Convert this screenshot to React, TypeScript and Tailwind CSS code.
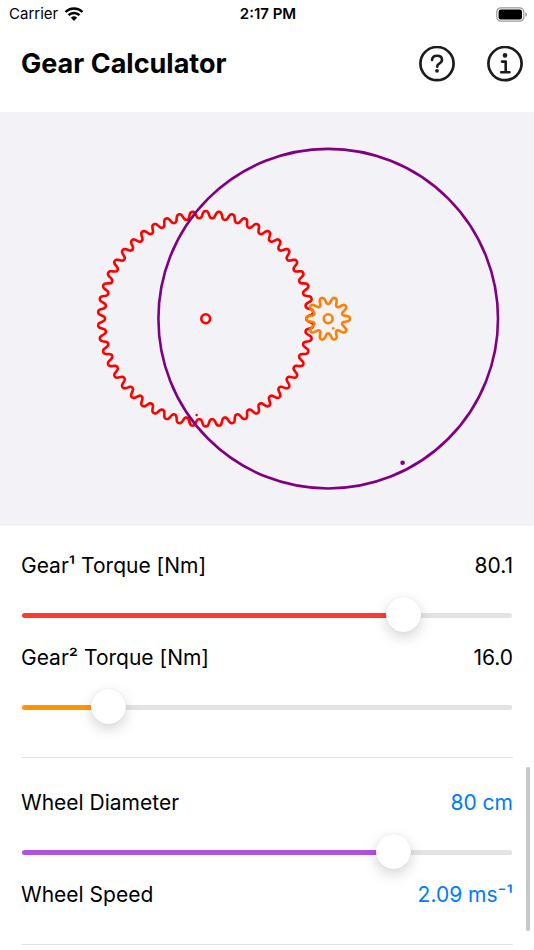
import { useState, type CSSProperties } from "react";

const TAU = Math.PI * 2;

/** Closed outline of a gear with rounded, tapering teeth. `phase` is the angle of the first tooth. */
function gearPath(cx: number, cy: number, radius: number, teeth: number, phase: number) {
  const steps = teeth * 24;
  const points: string[] = [];
  for (let i = 0; i < steps; i++) {
    const angle = (i / steps) * TAU;
    const wave = Math.tanh(1.4 * Math.cos(teeth * (angle - phase))) / Math.tanh(1.4);
    const r = radius + 3.5 * wave;
    points.push(`${(cx + r * Math.cos(angle)).toFixed(2)},${(cy + r * Math.sin(angle)).toFixed(2)}`);
  }
  return `M${points.join("L")}Z`;
}

const drivingGear = gearPath(205.7, 318.7, 104.2, 50, TAU / 100);
const drivenGear = gearPath(328.2, 318.7, 18.2, 10, 0);

function StatusBar() {
  return (
    <div className="grid h-7 grid-cols-3 items-center pl-[9px] pr-[7px] text-[15px] leading-5">
      <div className="flex items-center gap-1.5">
        <span>Carrier</span>
        <svg width="20" height="14" viewBox="0 0 19 14" aria-hidden="true">
          <g fill="none" stroke="#000" strokeWidth="2.4">
            <path d="M1 5A12.2 12.2 0 0 1 18 5" />
            <path d="M4 8.2A7.8 7.8 0 0 1 15 8.2" />
          </g>
          <path d="M9.5 14L6.4 10.8A4.5 4.5 0 0 1 12.6 10.8Z" />
        </svg>
      </div>
      <span className="text-center font-semibold">2:17 PM</span>
      <svg className="justify-self-end" width="31" height="15" viewBox="0 0 31 15" aria-hidden="true">
        <rect x="0.8" y="0.8" width="27" height="13.4" rx="4" fill="none" stroke="#999" strokeWidth="1.2" />
        <rect x="2.6" y="2.6" width="23.4" height="9.8" rx="2.2" />
        <path d="M29.3 5.2a2.4 2.4 0 0 1 0 4.6z" fill="#999" />
      </svg>
    </div>
  );
}

function Header() {
  return (
    <header className="flex h-[84px] items-start justify-between pl-[21px] pr-[11px] pt-[18px]">
      <h1 className="text-[27px] font-bold leading-9">Gear Calculator</h1>
      <div className="flex gap-8">
        <button type="button" aria-label="Help">
          <svg width="36" height="36" viewBox="0 0 36 36" fill="none" stroke="#1c1c1e">
            <circle cx="18" cy="17.6" r="16.6" strokeWidth="2.7" />
            <path d="M13 13.9c.3-2.8 2.3-4.2 5-4.2 3 0 5 1.6 5 4.1 0 2-1.2 2.9-2.7 3.8-1.5.9-2.1 1.5-2.1 2.8v.4" strokeWidth="2.6" strokeLinecap="round" strokeLinejoin="round" />
            <circle cx="18" cy="24.8" r="1.9" fill="#1c1c1e" stroke="none" />
          </svg>
        </button>
        <button type="button" aria-label="Information">
          <svg width="36" height="36" viewBox="0 0 36 36" fill="none" stroke="#1c1c1e">
            <circle cx="18" cy="17.6" r="16.6" strokeWidth="2.7" />
            <path d="M15 15.6h3.7v10.4M14.2 26.2h8.3" strokeWidth="2.6" strokeLinecap="round" strokeLinejoin="round" />
            <circle cx="18" cy="9.4" r="2.3" fill="#1c1c1e" stroke="none" />
          </svg>
        </button>
      </div>
    </header>
  );
}

function GearDrawing() {
  return (
    <section className="bg-[#f2f2f7]" aria-label="Gear train">
      <svg className="block w-full" viewBox="0 112 534 414" fill="none" strokeWidth="2.6" strokeLinejoin="round">
        <path d={drivingGear} stroke="#ff0000" />
        <path d="M188.5 419.2l2 5" stroke="#ff0000" />
        <circle cx="205.7" cy="318.7" r="4.4" stroke="#ff0000" />
        <circle cx="196.6" cy="415" r="1.3" fill="#ff0000" stroke="none" />
        <circle cx="328.2" cy="318.7" r="169.8" stroke="#800080" />
        <circle cx="402.6" cy="462.8" r="2.3" fill="#800080" stroke="none" />
        <path d={drivenGear} stroke="#ff8000" />
        <circle cx="328.2" cy="318.7" r="4.4" stroke="#ff8000" />
        <circle cx="333.2" cy="328.2" r="1.3" fill="#ff8000" stroke="none" />
      </svg>
    </section>
  );
}

type SliderRowProps = {
  id: string;
  label: string;
  display: string;
  displayClass?: string;
  color: string;
  min: number;
  value: number;
  onChange: (value: number) => void;
};

function SliderRow({ id, label, display, displayClass = "", color, min, value, onChange }: SliderRowProps) {
  const ratio = (value - min) / (100 - min);
  const fill = { "--fill": `${ratio * 100}%`, "--tint": color } as CSSProperties;
  return (
    <div className="flex flex-col gap-4">
      <div className="flex justify-between leading-7">
        <label htmlFor={id}>{label}</label>
        <output htmlFor={id} className={displayClass}>{display}</output>
      </div>
      <input
        id={id}
        type="range"
        min={min}
        max={100}
        step={0.1}
        value={value}
        onChange={(event) => onChange(Number(event.target.value))}
        style={fill}
        className="h-9 w-full appearance-none bg-transparent px-px pt-[3px] [&::-webkit-slider-runnable-track]:h-[5px] [&::-webkit-slider-runnable-track]:rounded-full [&::-webkit-slider-runnable-track]:bg-[linear-gradient(to_right,var(--tint)_var(--fill),#e3e3e5_var(--fill))] [&::-webkit-slider-thumb]:mt-[-16px] [&::-webkit-slider-thumb]:size-[35px] [&::-webkit-slider-thumb]:appearance-none [&::-webkit-slider-thumb]:rounded-full [&::-webkit-slider-thumb]:bg-white [&::-webkit-slider-thumb]:shadow-[0_0_1px_rgba(0,0,0,0.15),0_5px_14px_rgba(0,0,0,0.17)]"
      />
    </div>
  );
}

export default function App() {
  const [torque1, setTorque1] = useState(80.1);
  const [torque2, setTorque2] = useState(16);
  const [diameter, setDiameter] = useState(80);

  return (
    <div className="h-screen overflow-hidden bg-white font-['Inter','Liberation_Sans',sans-serif] text-black">
      <StatusBar />
      <Header />
      <GearDrawing />
      <main className="relative px-[21px] text-[21px]">
        <section className="flex flex-col gap-3 border-b border-[#e3e3e5] pb-[33px] pt-[26px]">
          <SliderRow id="torque-1" label="Gear¹ Torque [Nm]" display={torque1.toFixed(1)} color="#ff3b30" min={1} value={torque1} onChange={setTorque1} />
          <SliderRow id="torque-2" label="Gear² Torque [Nm]" display={torque2.toFixed(1)} color="#ff9500" min={1} value={torque2} onChange={setTorque2} />
        </section>
        <section className="flex flex-col gap-3 border-b border-[#e3e3e5] pb-[35px] pt-[31px]">
          <SliderRow id="diameter" label="Wheel Diameter" display={`${diameter.toFixed(0)} cm`} displayClass="text-[#007aff]" color="#af52de" min={10} value={diameter} onChange={setDiameter} />
          <div className="flex justify-between leading-7">
            <span>Wheel Speed</span>
            <span className="text-[#007aff]">2.09 ms⁻¹</span>
          </div>
        </section>
        <div className="absolute bottom-[14px] right-1 h-[164px] w-1 rounded-full bg-[#c6c6c6]" aria-hidden="true" />
      </main>
    </div>
  );
}
